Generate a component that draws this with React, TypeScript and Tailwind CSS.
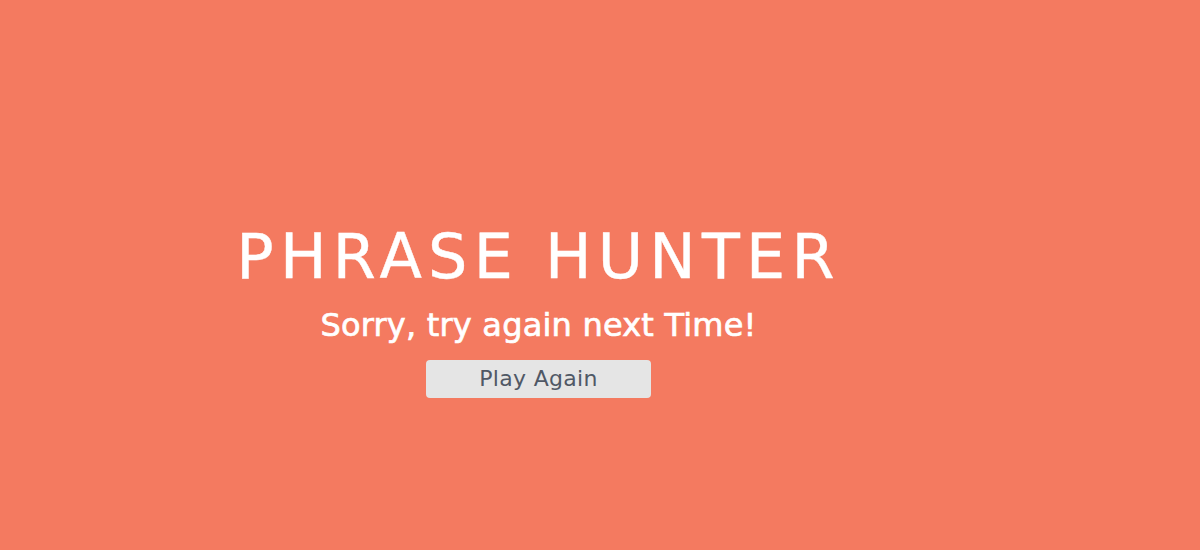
export default function App() {
  return (
    <div className="h-[550px] w-full bg-[#F47A60] overflow-hidden" style={{ fontFamily: '"DejaVu Sans", sans-serif' }}>
      <div className="w-[1077px] flex flex-col items-center pt-[226px]">
        <h1 className="text-[62px] leading-[62px] text-white tracking-[6.2px] font-normal [-webkit-text-stroke:0.4px_white]">PHRASE HUNTER</h1>
        <p className="mt-[21px] text-[32px] leading-[32px] text-white tracking-[0.2px] [-webkit-text-stroke:0.7px_white]">Sorry, try again next Time!</p>
        <button className="mt-[19px] w-[225px] h-[38px] rounded-[4px] bg-[#E5E5E5] text-[#505866] text-[22px] leading-[38px] tracking-[0.3px]">Play Again</button>
      </div>
    </div>
  );
}
